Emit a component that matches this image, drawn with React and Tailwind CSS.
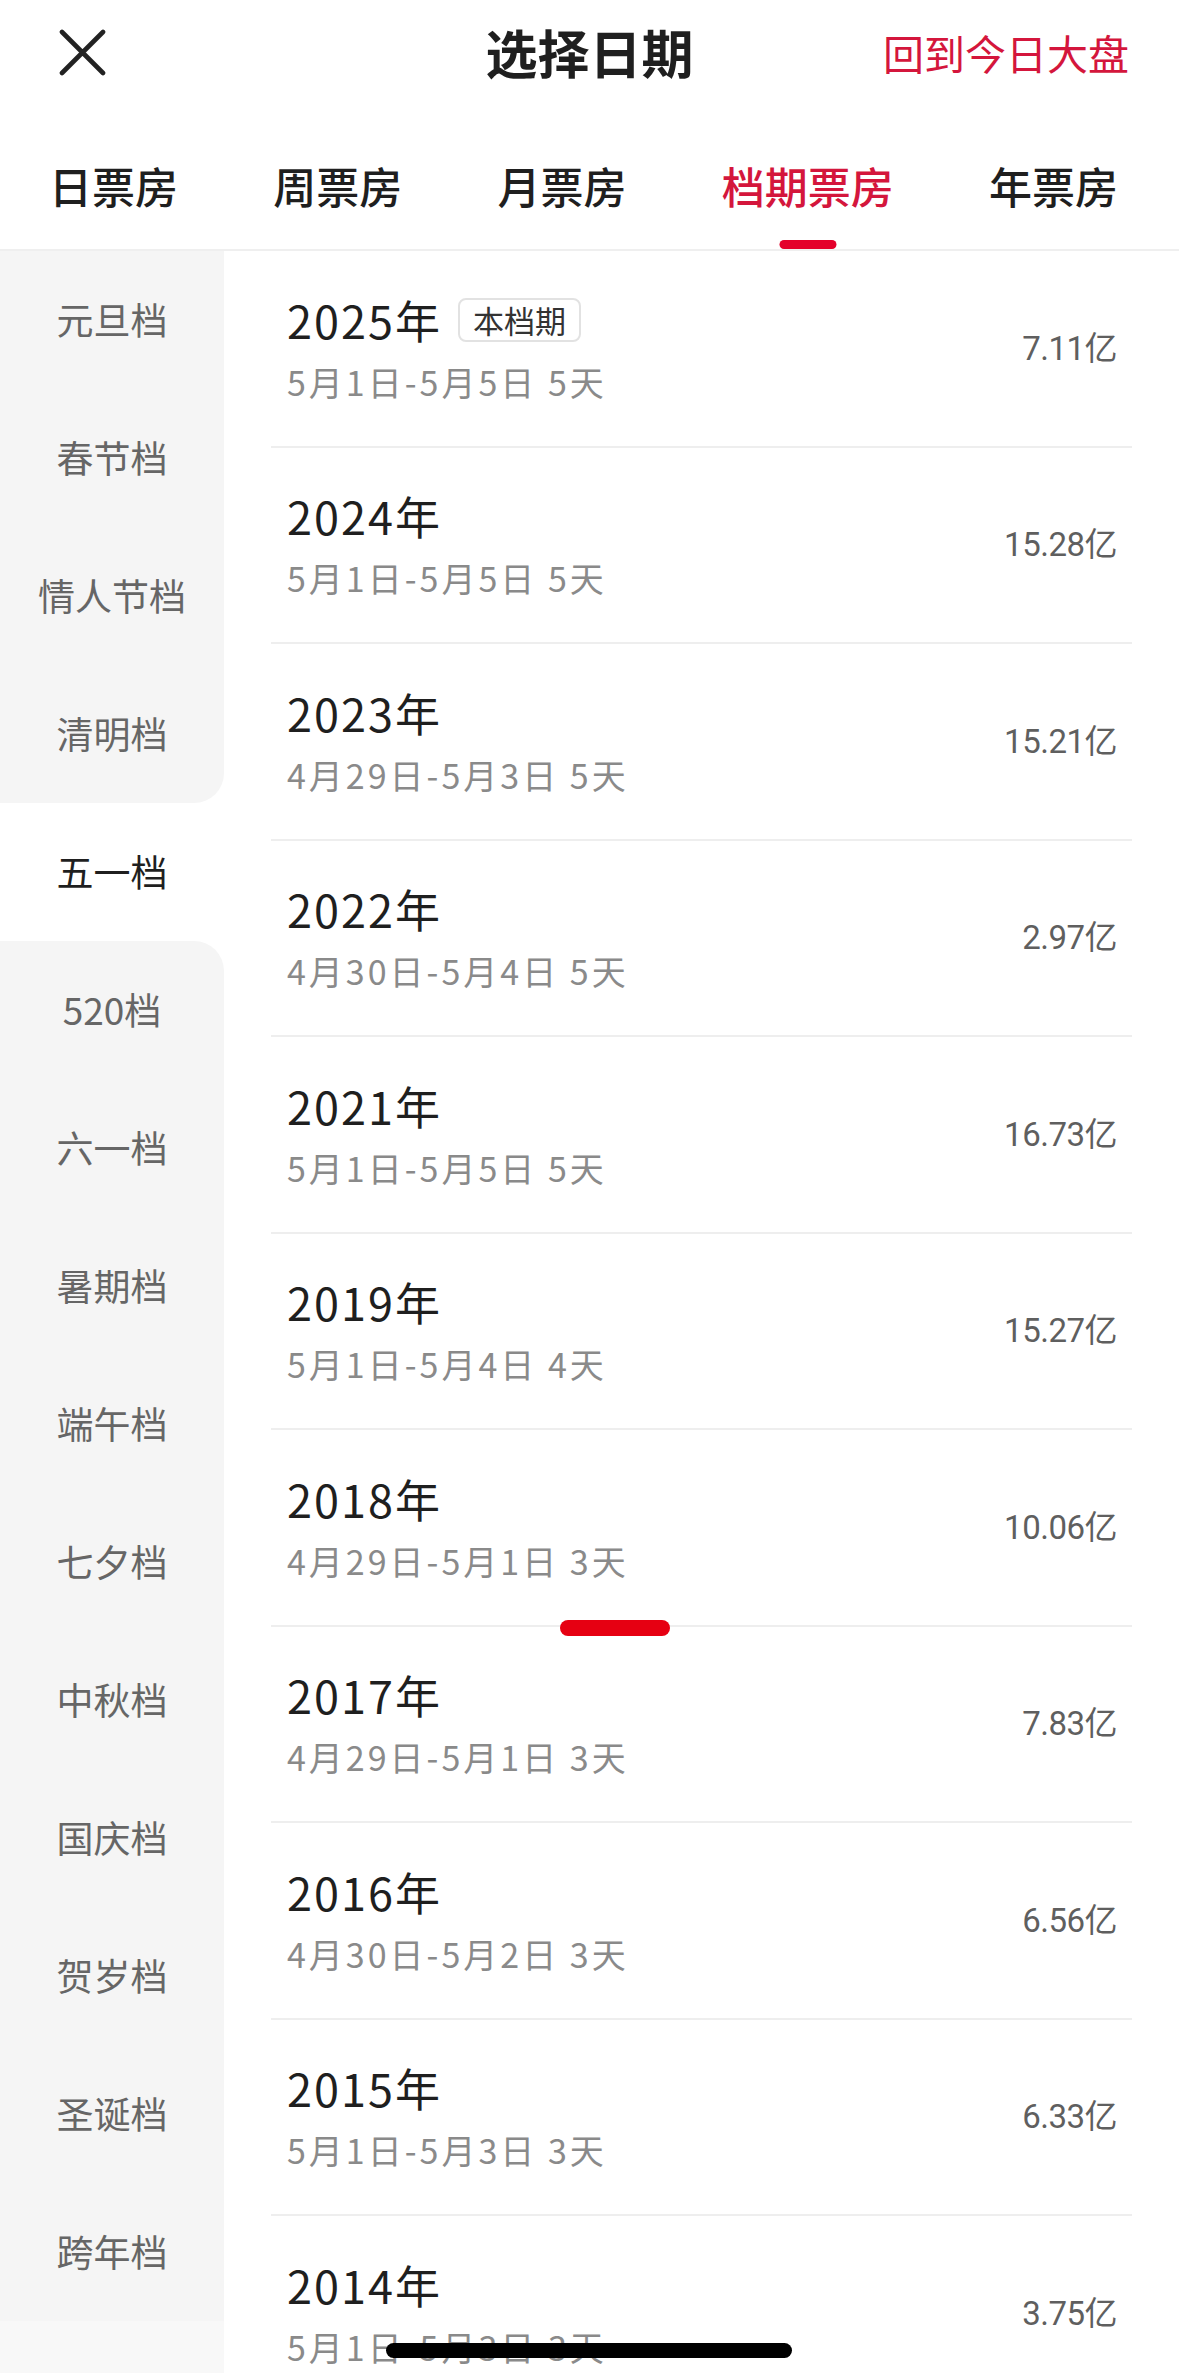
import { useState } from 'react';

const tabs = ['日票房', '周票房', '月票房', '档期票房', '年票房'];

const seasons = [
  '元旦档', '春节档', '情人节档', '清明档', '五一档', '520档', '六一档', '暑期档',
  '端午档', '七夕档', '中秋档', '国庆档', '贺岁档', '圣诞档', '跨年档',
];

const years = [
  { year: '2025年', range: '5月1日-5月5日 5天', total: '7.11亿', current: true },
  { year: '2024年', range: '5月1日-5月5日 5天', total: '15.28亿' },
  { year: '2023年', range: '4月29日-5月3日 5天', total: '15.21亿' },
  { year: '2022年', range: '4月30日-5月4日 5天', total: '2.97亿' },
  { year: '2021年', range: '5月1日-5月5日 5天', total: '16.73亿' },
  { year: '2019年', range: '5月1日-5月4日 4天', total: '15.27亿' },
  { year: '2018年', range: '4月29日-5月1日 3天', total: '10.06亿' },
  { year: '2017年', range: '4月29日-5月1日 3天', total: '7.83亿' },
  { year: '2016年', range: '4月30日-5月2日 3天', total: '6.56亿' },
  { year: '2015年', range: '5月1日-5月3日 3天', total: '6.33亿' },
  { year: '2014年', range: '5月1日-5月3日 3天', total: '3.75亿' },
];

const App = () => {
  const [activeTab, setActiveTab] = useState(3);
  const [activeSeason, setActiveSeason] = useState(4);

  return (
    <div
      className="relative w-[1179px] h-[2373px] overflow-hidden bg-white flex flex-col"
      style={{ fontFamily: '"Noto Sans CJK SC", "Noto Sans", sans-serif' }}
    >
      {/* Top bar */}
      <div className="grid grid-cols-[1fr_auto_1fr] items-center h-[104px] shrink-0">
        <button className="justify-self-start pl-[59px]" aria-label="close">
          <svg className="w-[47px] h-[47px]" viewBox="0 0 47 47" fill="none" stroke="#222" strokeWidth={4.6} strokeLinecap="round">
            <path d="M3 3L44 44M44 3L3 44" />
          </svg>
        </button>
        <h1 className="text-[52px] font-bold text-[#1f1f1f] leading-none">选择日期</h1>
        <button className="justify-self-end pr-[50px] text-[41px] leading-none text-[#d4163c]">回到今日大盘</button>
      </div>

      {/* Tabs */}
      <div className="relative flex justify-between items-stretch h-[147px] pl-[49px] pr-[61px] border-b-2 border-[#efefef] shrink-0">
        {tabs.map((t, i) => (
          <button
            key={t}
            onClick={() => setActiveTab(i)}
            className={`relative flex items-start pt-[52px] text-[43px] leading-[58px] font-medium ${
              i === activeTab ? 'text-[#d4163c]' : 'text-[#1f1f1f]'
            }`}
          >
            {t}
            {i === activeTab && (
              <span className="absolute left-1/2 -translate-x-1/2 bottom-0 w-[57px] h-[9px] rounded-full bg-[#e4002b]" />
            )}
          </button>
        ))}
      </div>

      <div className="flex flex-1 min-h-0">
        {/* Season sidebar */}
        <div className="w-[224px] shrink-0 flex flex-col bg-white">
          {seasons.map((s, i) => {
            const selected = i === activeSeason;
            return (
              <button
                key={s}
                onClick={() => setActiveSeason(i)}
                className={`h-[138px] shrink-0 flex items-center justify-center text-[37px] ${
                  selected ? 'bg-white text-[#1f1f1f]' : 'bg-[#f5f5f5] text-[#666]'
                } ${i === activeSeason - 1 ? 'rounded-br-[30px]' : ''} ${
                  i === activeSeason + 1 ? 'rounded-tr-[30px]' : ''
                }`}
              >
                {s}
              </button>
            );
          })}
          <div className="flex-1 bg-[#f8f8f8]" />
        </div>

        {/* Year list */}
        <div className="flex-1 flex flex-col">
          {years.map((y) => (
            <div
              key={y.year}
              className="mx-[47px] h-[196.5px] shrink-0 border-b-2 border-[#eeeeee] flex items-center justify-between pl-[16px] pr-[15px]"
            >
              <div className="flex flex-col">
                <div className="flex items-center">
                  <span className="text-[45px] leading-[56px] tracking-[2px] text-[#1f1f1f]">{y.year}</span>
                  {y.current && (
                    <span className="ml-[16px] h-[44px] px-[13px] flex items-center border-2 border-[#e2e2e2] rounded-[8px] text-[31px] text-[#333]">
                      本档期
                    </span>
                  )}
                </div>
                <span className="mt-[11px] text-[34px] leading-[46px] tracking-[3px] text-[#8a8a8a]">{y.range}</span>
              </div>
              <span
                className="text-[33px] text-[#5f5f5f] tracking-[-0.5px]"
                style={{ fontFamily: 'Roboto, "Noto Sans CJK SC", sans-serif' }}
              >
                {y.total}
              </span>
            </div>
          ))}
        </div>
      </div>

      {/* scroll indicator */}
      <div className="absolute left-[560px] top-[1620px] w-[110px] h-[16px] rounded-full bg-[#e60012]" />
      {/* home indicator */}
      <div className="absolute left-[386px] top-[2343px] w-[406px] h-[15px] rounded-full bg-black" />
    </div>
  );
};

export default App;
